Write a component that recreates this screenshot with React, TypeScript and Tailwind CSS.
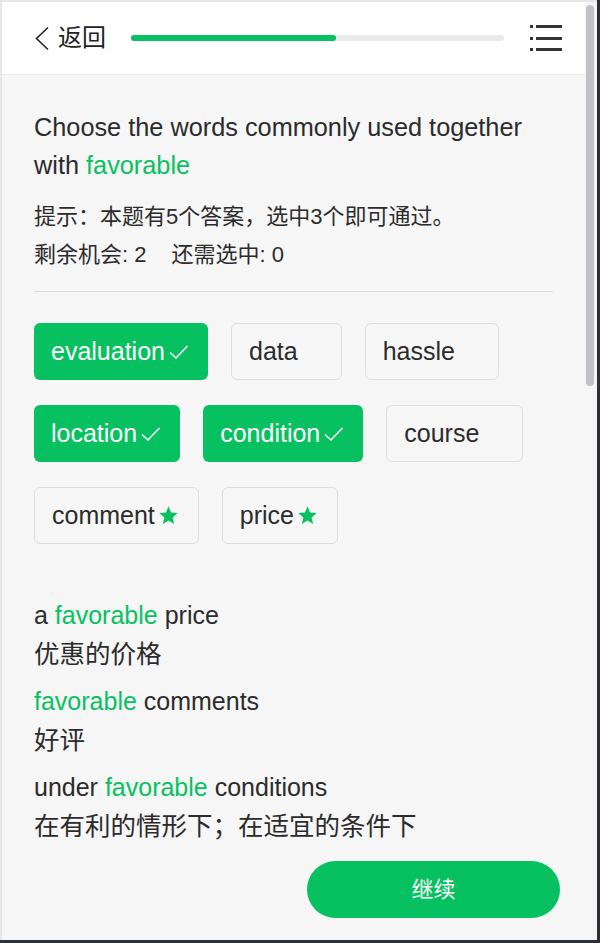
const GREEN = "text-[#07c160]";

type Chip = { word: string; state: "correct" | "idle" | "missed" };

const chipRows: Chip[][] = [
  [
    { word: "evaluation", state: "correct" },
    { word: "data", state: "idle" },
    { word: "hassle", state: "idle" },
  ],
  [
    { word: "location", state: "correct" },
    { word: "condition", state: "correct" },
    { word: "course", state: "idle" },
  ],
  [
    { word: "comment", state: "missed" },
    { word: "price", state: "missed" },
  ],
];

const phrases = [
  { pre: "a ", post: " price", zh: "优惠的价格" },
  { pre: "", post: " comments", zh: "好评" },
  { pre: "under ", post: " conditions", zh: "在有利的情形下；在适宜的条件下" },
];

function Check() {
  return (
    <svg width="21" height="21" viewBox="0 0 21 21" fill="none">
      <path d="M2 11.5 L8 17 L19.5 5" stroke="white" strokeWidth="1.6" />
    </svg>
  );
}

function Star() {
  return (
    <svg width="21" height="21" viewBox="0 0 24 24">
      <path
        d="M12 1.5 L14.9 8.6 L22.5 9.2 L16.7 14.2 L18.5 21.7 L12 17.7 L5.5 21.7 L7.3 14.2 L1.5 9.2 L9.1 8.6 Z"
        fill="#07c160"
      />
    </svg>
  );
}

function WordChip({ chip }: { chip: Chip }) {
  const on = chip.state === "correct";
  return (
    <div
      className={
        on
          ? "h-[57px] flex items-center gap-[3px] pl-[17px] pr-[19px] rounded-[6px] bg-[#07c160] text-white"
          : "h-[57px] flex items-center gap-[3px] pl-[17px] pr-[19px] rounded-[6px] border border-[#dddde2] bg-[#f6f6f6] text-[#2b2b2b]"
      }
    >
      <span className="text-[25px] leading-none">{chip.word}</span>
      <span className="w-[21px] h-[21px] flex items-center justify-center">
        {chip.state === "correct" && <Check />}
        {chip.state === "missed" && <Star />}
      </span>
    </div>
  );
}

export default function App() {
  return (
    <div
      className="w-[600px] h-[943px] flex flex-col bg-[#2a2f3a] overflow-hidden"
      style={{ fontFamily: '"Liberation Sans", "Noto Sans CJK SC", sans-serif' }}
    >
      <div className="flex-1 flex border-l-2 border-t-2 border-[#e6e6e6] mr-[3px] bg-[#f6f6f6]">
        {/* main */}
        <div className="w-[583px] flex flex-col">
          <header className="h-[73px] bg-white border-b border-[#ebebeb] flex items-center pl-[32px] pr-[22px]">
            <div className="flex items-center text-[#222]">
              <svg width="16" height="25" viewBox="0 0 16 25" fill="none">
                <path d="M14 1.5 L2.5 12.5 L14 23.5" stroke="#222" strokeWidth="1.6" />
              </svg>
              <span className="ml-[8px] text-[24px] leading-none">返回</span>
            </div>
            <div className="ml-[25px] w-[373px] h-[6px] rounded-full bg-[#e9e9ee]">
              <div className="h-full rounded-full bg-[#07c160]" style={{ width: "55%" }} />
            </div>
            <div className="ml-auto flex flex-col gap-[8.5px] pr-[1px]">
              {[0, 1, 2].map((i) => (
                <div key={i} className="flex items-center gap-[3px]">
                  <div className="w-[3px] h-[3px] bg-[#333]" />
                  <div className="w-[26px] h-[3px] bg-[#333]" />
                </div>
              ))}
            </div>
          </header>

          <div className="flex-1 flex flex-col pl-[32px] pr-[32px] pt-[33px] text-[#2b2b2b]">
            <p className="text-[25.3px] leading-[38px]">
              Choose the words commonly used together with{" "}
              <span className={GREEN}>favorable</span>
            </p>
            <div className="mt-[14px] text-[22px] leading-[38px]">
              <p>提示：本题有5个答案，选中3个即可通过。</p>
              <p>
                剩余机会: 2<span className="inline-block w-[25px]" />
                还需选中: 0
              </p>
            </div>
            <div className="mt-[17px] h-px bg-[#dcdcdc]" />

            <div className="mt-[31px] flex flex-col gap-[25px]">
              {chipRows.map((row, i) => (
                <div key={i} className="flex gap-[23px]">
                  {row.map((c) => (
                    <WordChip key={c.word} chip={c} />
                  ))}
                </div>
              ))}
            </div>

            <div className="mt-[52px] flex flex-col gap-[8px] text-[25px] leading-[39px]">
              {phrases.map((p) => (
                <div key={p.zh}>
                  <p>
                    {p.pre}
                    <span className={GREEN}>favorable</span>
                    {p.post}
                  </p>
                  <p className="text-[25.5px]">{p.zh}</p>
                </div>
              ))}
            </div>

            <div className="mt-[15px] flex justify-end -mr-[7px]">
              <button className="w-[253px] h-[57px] rounded-full bg-[#07c160] text-white text-[22px]">
                继续
              </button>
            </div>
          </div>
        </div>
        {/* scrollbar */}
        <div className="flex-1 pt-[3px] pl-[1px] pr-[2px]">
          <div className="w-[8px] h-[381px] rounded-full bg-[#c1c1c6]" />
        </div>
      </div>
      <div className="h-[3px]" />
    </div>
  );
}
